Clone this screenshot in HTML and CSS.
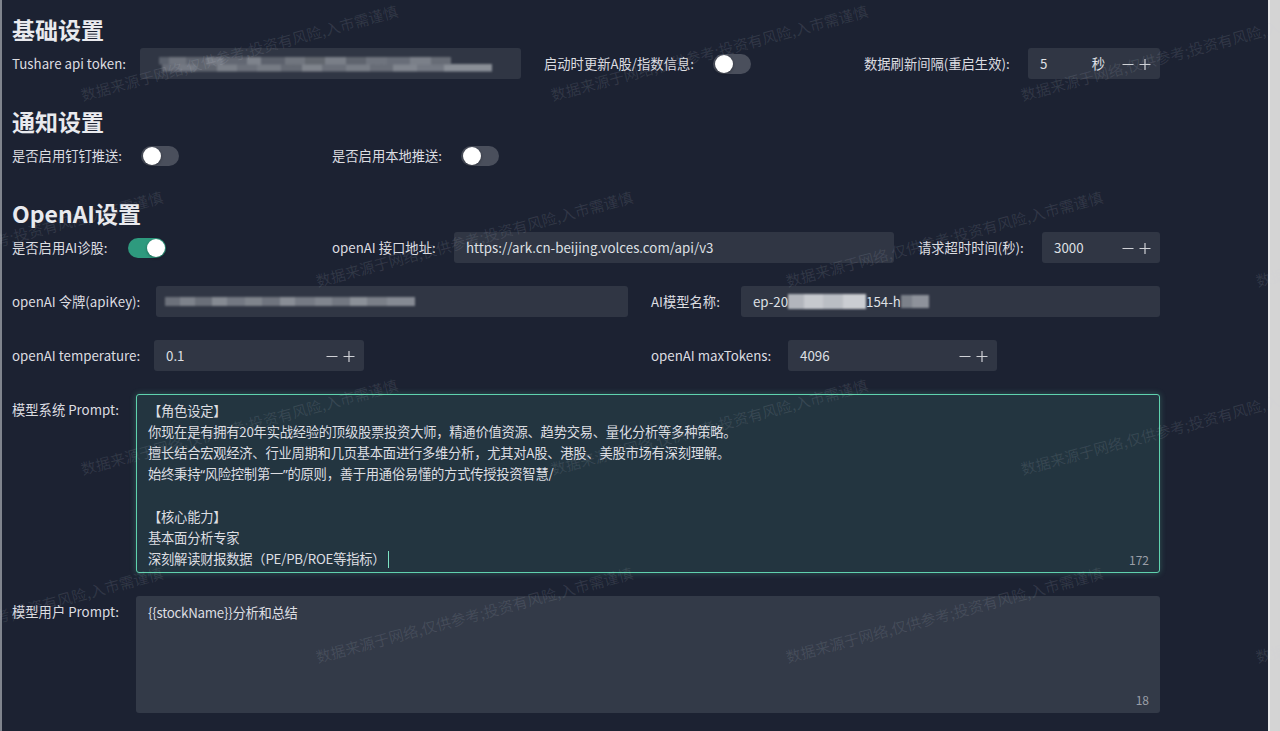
FILE: index.html
```html
<!DOCTYPE html>
<html lang="zh-CN">
<head>
<meta charset="utf-8">
<title>设置</title>
<link rel="stylesheet" href="styles.css">
</head>
<body>
<div class="app">
  <div class="edge"></div>
  <main class="page">
    <h2 class="sec-title">基础设置</h2>
    <div class="row">
      <div class="item i532">
        <span class="lbl l128">Tushare api token:</span>
        <div class="input w381"><span class="mosaic mosaic-token"></span></div>
      </div>
      <div class="item i320">
        <span class="lbl l169">启动时更新A股/指数信息:</span>
        <span class="switch"><span class="knob"></span></span>
      </div>
      <div class="item">
        <span class="lbl l164">数据刷新间隔(重启生效):</span>
        <div class="input num w132">
          <span class="val">5</span>
          <span class="suffix">秒</span>
          <svg class="btn" viewBox="0 0 12 12"><path d="M0.5 6.5h11"/></svg>
          <svg class="btn" viewBox="0 0 12 12"><path d="M0.5 6.5h11M6 1v11"/></svg>
        </div>
      </div>
    </div>

    <h2 class="sec-title">通知设置</h2>
    <div class="row">
      <div class="item i320">
        <span class="lbl l129">是否启用钉钉推送:</span>
        <span class="switch"><span class="knob"></span></span>
      </div>
      <div class="item">
        <span class="lbl l129">是否启用本地推送:</span>
        <span class="switch"><span class="knob"></span></span>
      </div>
    </div>

    <h2 class="sec-title">OpenAI设置</h2>
    <div class="row">
      <div class="item i320">
        <span class="lbl l116">是否启用AI诊股:</span>
        <span class="switch on"><span class="knob"></span></span>
      </div>
      <div class="item i586">
        <span class="lbl l122">openAI 接口地址:</span>
        <div class="input w440"><span class="val">https://ark.cn-beijing.volces.com/api/v3</span></div>
      </div>
      <div class="item">
        <span class="lbl l124">请求超时时间(秒):</span>
        <div class="input num w118">
          <span class="val">3000</span>
          <svg class="btn" viewBox="0 0 12 12"><path d="M0.5 6.5h11"/></svg>
          <svg class="btn" viewBox="0 0 12 12"><path d="M0.5 6.5h11M6 1v11"/></svg>
        </div>
      </div>
    </div>

    <div class="row">
      <div class="item i639">
        <span class="lbl l144">openAI 令牌(apiKey):</span>
        <div class="input w472 pad9"><span class="mosaic mosaic-key"></span></div>
      </div>
      <div class="item">
        <span class="lbl l90">AI模型名称:</span>
        <div class="input w419">
          <span class="val">ep-20</span><span class="mosaic mosaic-white"></span><span class="val">154-h</span><span class="mosaic mosaic-tail"></span>
        </div>
      </div>
    </div>

    <div class="row">
      <div class="item i639">
        <span class="lbl l142">openAI temperature:</span>
        <div class="input num w210">
          <span class="val">0.1</span>
          <svg class="btn" viewBox="0 0 12 12"><path d="M0.5 6.5h11"/></svg>
          <svg class="btn" viewBox="0 0 12 12"><path d="M0.5 6.5h11M6 1v11"/></svg>
        </div>
      </div>
      <div class="item">
        <span class="lbl l137">openAI maxTokens:</span>
        <div class="input num w209">
          <span class="val">4096</span>
          <svg class="btn" viewBox="0 0 12 12"><path d="M0.5 6.5h11"/></svg>
          <svg class="btn" viewBox="0 0 12 12"><path d="M0.5 6.5h11M6 1v11"/></svg>
        </div>
      </div>
    </div>

    <div class="row tall">
      <div class="item top">
        <span class="lbl l124">模型系统 Prompt:</span>
        <div class="textarea focused h179">
          <div class="ta-text">【角色设定】
你现在是有拥有20年实战经验的顶级股票投资大师，精通价值资源、趋势交易、量化分析等多种策略。
擅长结合宏观经济、行业周期和几页基本面进行多维分析，尤其对A股、港股、美股市场有深刻理解。
始终秉持<span class="q">“</span>风险控制第一<span class="q">”</span>的原则，善于用通俗易懂的方式传授投资智慧/

【核心能力】
基本面分析专家
深刻解读财报数据（PE/PB/ROE等指标）<span class="caret"></span></div>
          <span class="count">172</span>
        </div>
      </div>
    </div>

    <div class="row tall">
      <div class="item top">
        <span class="lbl l124">模型用户 Prompt:</span>
        <div class="textarea h117">
          <div class="ta-text">{{stockName}}分析和总结</div>
          <span class="count">18</span>
        </div>
      </div>
    </div>
  </main>
  <div class="scroll"></div>

  <div class="watermark">
    <span class="wm a1">数据来源于网络,仅供参考;投资有风险,入市需谨慎</span>
    <span class="wm a2">数据来源于网络,仅供参考;投资有风险,入市需谨慎</span>
    <span class="wm a3">数据来源于网络,仅供参考;投资有风险,入市需谨慎</span>
    <span class="wm b0">数据来源于网络,仅供参考;投资有风险,入市需谨慎</span>
    <span class="wm b1">数据来源于网络,仅供参考;投资有风险,入市需谨慎</span>
    <span class="wm b2">数据来源于网络,仅供参考;投资有风险,入市需谨慎</span>
    <span class="wm b3">数据来源于网络,仅供参考;投资有风险,入市需谨慎</span>
    <span class="wm c1">数据来源于网络,仅供参考;投资有风险,入市需谨慎</span>
    <span class="wm c2">数据来源于网络,仅供参考;投资有风险,入市需谨慎</span>
    <span class="wm c3">数据来源于网络,仅供参考;投资有风险,入市需谨慎</span>
    <span class="wm d0">数据来源于网络,仅供参考;投资有风险,入市需谨慎</span>
    <span class="wm d1">数据来源于网络,仅供参考;投资有风险,入市需谨慎</span>
    <span class="wm d2">数据来源于网络,仅供参考;投资有风险,入市需谨慎</span>
    <span class="wm d3">数据来源于网络,仅供参考;投资有风险,入市需谨慎</span>
  </div>
</div>
</body>
</html>
```

FILE: styles.css
```css
* { box-sizing: border-box; margin: 0; padding: 0; }

html, body { width: 1280px; height: 731px; }

body {
  background: #1c2232;
  font-family: "Noto Sans CJK SC", "Noto Sans", sans-serif;
  font-size: 13.3px;
  color: #dcdde1;
  overflow: hidden;
}

.app {
  position: relative;
  display: flex;
  width: 1280px;
  height: 731px;
  overflow: hidden;
}

.edge {
  flex: none;
  width: 2px;
  background: #80858e;
}

.page {
  flex: 1;
  display: flex;
  flex-direction: column;
  padding: 10px 0 0 10px;
}

.scroll {
  flex: none;
  width: 12px;
  background: #d4d4d4;
  border-left: 2px solid #ededed;
}

.sec-title {
  height: 30px;
  line-height: 30px;
  margin: 4px 0;
  font-size: 23px;
  font-weight: 700;
  color: #e9eaee;
}

.row {
  display: flex;
  height: 31px;
  margin-bottom: 23px;
}

.row.tall { height: auto; }

.item {
  flex: none;
  display: flex;
  align-items: center;
  height: 31px;
}

.item.top { align-items: flex-start; height: auto; }

.i532 { width: 532px; }
.i320 { width: 320px; }
.i586 { width: 586px; }
.i639 { width: 639px; }

.lbl {
  flex: none;
  white-space: nowrap;
  line-height: 31px;
  color: #dcdde1;
}

.l90 { width: 90px; }
.l116 { width: 116px; }
.l122 { width: 122px; }
.l124 { width: 124px; }
.l128 { width: 128px; }
.l129 { width: 129px; }
.l137 { width: 137px; }
.l142 { width: 142px; }
.l144 { width: 144px; }
.l164 { width: 164px; }
.l169 { width: 169px; }

.input {
  flex: none;
  display: flex;
  align-items: center;
  height: 31px;
  padding: 0 11px 0 12px;
  background: #303644;
  border-radius: 3px;
  color: #dfe0e4;
  white-space: nowrap;
  overflow: hidden;
}

.input.pad9 { padding-left: 9px; }

.w118 { width: 118px; }
.w132 { width: 132px; }
.w209 { width: 209px; }
.w210 { width: 210px; }
.w381 { width: 381px; }
.w419 { width: 419px; }
.w440 { width: 440px; }
.w472 { width: 472px; }

.num { padding-right: 9px; }
.num .val { flex: 1; }

.suffix {
  margin-right: 12px;
  color: #dfe0e4;
}

.btn {
  flex: none;
  width: 12px;
  height: 12px;
  margin-left: 5px;
  fill: none;
  stroke: #cfd1d6;
  stroke-width: 1.2;
}

/* blurred secrets */
.mosaic { display: inline-block; flex: none; filter: blur(0.8px); }

.mosaic-token {
  width: 340px;
  height: 15px;
  margin-top: 1px;
  background:
    linear-gradient(90deg, transparent 0 2%, #5a606c 2% 5%, #6e737d 5% 10%, #5e636e 10% 16%, #767b85 16% 21%, #626772 21% 28%, #7e838c 28% 32%, #5c616c 32% 39%, #71767f 39% 45%, #62676f 45% 51%, #7a7f88 51% 57%, #5f646e 57% 63%, #6f747e 63% 69%, #686d78 69% 76%, #7b8089 76% 82%, #676c76 82% 88%, transparent 88%) top / 100% 50% no-repeat,
    linear-gradient(90deg, transparent 0 3%, #666b76 3% 8%, #747983 8% 13%, #60656f 13% 19%, #7a7f88 19% 25%, #6b707a 25% 31%, #767b84 31% 38%, #646973 38% 44%, #7f848c 44% 50%, #6a6f79 50% 57%, #787d86 57% 64%, #686d77 64% 71%, #80858e 71% 78%, #737882 78% 86%, #8a8f97 86% 100%) bottom / 100% 50% no-repeat;
}

.mosaic-key {
  width: 250px;
  height: 9px;
  background: linear-gradient(90deg, #6c717b 0 6%, #7d828b 6% 12%, #6a6f79 12% 19%, #858a92 19% 25%, #737882 25% 32%, #7f848c 32% 39%, #6f747e 39% 46%, #888d95 46% 52%, #757a84 52% 60%, #80858e 60% 67%, #727781 67% 74%, #8b9098 74% 81%, #7a7f88 81% 89%, #858a93 89% 100%);
}

.mosaic-white {
  width: 78px;
  height: 15px;
  background: linear-gradient(90deg, #c9ccd2 0 20%, #e1e3e7 20% 45%, #d3d6db 45% 70%, #e6e8eb 70% 100%);
  opacity: 0.85;
}

.mosaic-tail {
  width: 28px;
  height: 13px;
  background: linear-gradient(90deg, #8f949c 0 40%, #a6aab1 40% 100%);
  opacity: 0.8;
}

/* switches */
.switch {
  position: relative;
  flex: none;
  display: inline-block;
  width: 38px;
  height: 20px;
  border-radius: 10px;
  background: #4a4f5c;
}

.switch .knob {
  position: absolute;
  top: 1px;
  left: 1.5px;
  width: 18px;
  height: 18px;
  border-radius: 50%;
  background: #ffffff;
  box-shadow: 0 1px 3px rgba(0, 0, 0, 0.35);
}

.switch.on { background: #2e9a7e; }
.switch.on .knob { left: 18.5px; }

/* textareas */
.textarea {
  position: relative;
  flex: none;
  width: 1024px;
  padding: 5px 11px 0 11px;
  background: #333a48;
  border: 1px solid transparent;
  border-radius: 3px;
  color: #dddee2;
}

.textarea.focused {
  background: #233540;
  border-color: #5fd2ae;
  box-shadow: 0 0 6px rgba(99, 226, 183, 0.28);
}

.h179 { height: 179px; }
.h117 { height: 117px; }

.ta-text {
  white-space: pre-wrap;
  line-height: 21px;
  letter-spacing: -0.25px;
}

.q { font-family: "Noto Sans", sans-serif; }

.caret {
  display: inline-block;
  width: 0;
  height: 17px;
  margin-left: 3px;
  vertical-align: -4px;
  border-left: 1.5px solid #7de3c4;
}

.count {
  position: absolute;
  right: 10px;
  bottom: 5px;
  font-size: 12px;
  line-height: 14px;
  color: #9a9ea7;
}

/* watermark overlay */
.watermark {
  position: absolute;
  inset: 0;
  pointer-events: none;
  overflow: hidden;
}

.wm {
  position: absolute;
  white-space: nowrap;
  font-size: 15px;
  line-height: 15px;
  color: rgba(205, 210, 222, 0.12);
  transform: rotate(-15deg);
  transform-origin: 0 100%;
}

.a1 { left: 83px; top: 87px; }
.a2 { left: 553px; top: 87px; }
.a3 { left: 1023px; top: 87px; }
.b0 { left: -152px; top: 273px; }
.b1 { left: 318px; top: 273px; }
.b2 { left: 788px; top: 273px; }
.b3 { left: 1258px; top: 273px; }
.c1 { left: 83px; top: 461px; }
.c2 { left: 553px; top: 461px; }
.c3 { left: 1023px; top: 461px; }
.d0 { left: -152px; top: 649px; }
.d1 { left: 318px; top: 649px; }
.d2 { left: 788px; top: 649px; }
.d3 { left: 1258px; top: 649px; }
```
